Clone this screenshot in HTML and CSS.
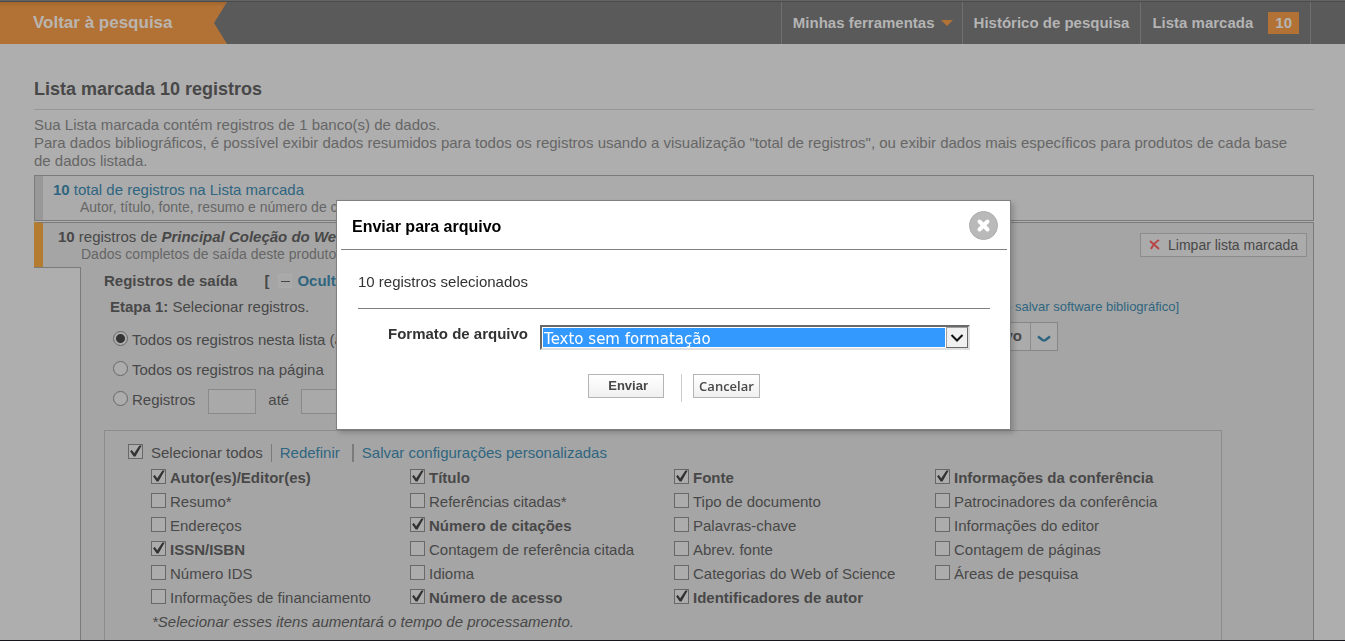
FILE: index.html
```html
<!DOCTYPE html>
<html lang="pt-BR">
<head>
<meta charset="utf-8">
<title>Lista marcada</title>
<link rel="stylesheet" href="styles.css">
</head>
<body>
<div class="page">
  <header class="topbar">
    <a class="back" href="#">Voltar à pesquisa</a>
    <nav class="nav">
      <a class="nav-item" href="#">Minhas ferramentas <span class="caret"></span></a>
      <a class="nav-item" href="#">Histórico de pesquisa</a>
      <a class="nav-item" href="#">Lista marcada <span class="count">10</span></a>
    </nav>
  </header>
  <main class="content">
    <h1 class="title">Lista marcada 10 registros</h1>
    <div class="intro">
      <p>Sua Lista marcada contém registros de 1 banco(s) de dados.</p>
      <p>Para dados bibliográficos, é possível exibir dados resumidos para todos os registros usando a visualização "total de registros", ou exibir dados mais específicos para produtos de cada base de dados listada.</p>
    </div>
    <section class="total">
      <a class="total-link" href="#"><b>10</b> total de registros na Lista marcada</a>
      <p class="sub">Autor, título, fonte, resumo e número de citações</p>
    </section>
    <section class="product">
      <div class="product-head">
        <div>
          <p class="product-name"><b>10</b> registros de <b><i>Principal Coleção do Web of Science</i></b></p>
          <p class="sub">Dados completos de saída deste produto</p>
        </div>
        <button class="clear" type="button">
          <svg width="12" height="12" viewBox="0 0 12 12"><path d="M1 2L10 10M10 1Q5 4 2 10" fill="none" stroke="#b94343" stroke-width="2"/></svg>
          Limpar lista marcada
        </button>
      </div>
      <div class="product-body">
        <div class="gutter"></div>
        <div class="panel">
          <h2 class="panel-title">Registros de saída <span class="toggle">[ <span class="minus"></span> <a href="#">Ocultar opções</a> ]</span></h2>
          <div class="steps">
            <div class="step">
              <p class="step-title"><b>Etapa 1:</b> Selecionar registros.</p>
              <div class="option"><input class="radio" type="radio" name="range" id="r1" checked><label for="r1">Todos os registros nesta lista (até 500)</label></div>
              <div class="option"><input class="radio" type="radio" name="range" id="r2"><label for="r2">Todos os registros na página</label></div>
              <div class="option"><input class="radio" type="radio" name="range" id="r3"><label for="r3">Registros</label><input class="num from" type="text" aria-label="De"><label for="to">até</label><input class="num" type="text" id="to"></div>
            </div>
            <div class="step-right">
              <a class="help" href="#">[Saiba mais sobre como salvar software bibliográfico]</a>
              <button class="save" type="button"><span class="save-label">Salvar em arquivo</span><span class="save-arrow"><svg width="14" height="8" viewBox="0 0 14 8"><path d="M1 1.5L5.5 5Q7 6 8.500 5L13 1.500" fill="none" stroke="#2f6580" stroke-width="2.500"/></svg></span></button>
            </div>
          </div>
          <div class="fields">
            <div class="fields-bar">
              <input class="check" type="checkbox" id="all" checked><label class="all-label" for="all">Selecionar todos</label>
              <a class="reset" href="#">Redefinir</a>
              <a class="store" href="#">Salvar configurações personalizadas</a>
            </div>
            <div class="field-grid">
              <div class="field"><input class="check" type="checkbox" id="f1" checked><label for="f1">Autor(es)/Editor(es)</label></div>
              <div class="field"><input class="check" type="checkbox" id="f2" checked><label for="f2">Título</label></div>
              <div class="field"><input class="check" type="checkbox" id="f3" checked><label for="f3">Fonte</label></div>
              <div class="field"><input class="check" type="checkbox" id="f4" checked><label for="f4">Informações da conferência</label></div>
              <div class="field"><input class="check" type="checkbox" id="f5"><label for="f5">Resumo*</label></div>
              <div class="field"><input class="check" type="checkbox" id="f6"><label for="f6">Referências citadas*</label></div>
              <div class="field"><input class="check" type="checkbox" id="f7"><label for="f7">Tipo de documento</label></div>
              <div class="field"><input class="check" type="checkbox" id="f8"><label for="f8">Patrocinadores da conferência</label></div>
              <div class="field"><input class="check" type="checkbox" id="f9"><label for="f9">Endereços</label></div>
              <div class="field"><input class="check" type="checkbox" id="f10" checked><label for="f10">Número de citações</label></div>
              <div class="field"><input class="check" type="checkbox" id="f11"><label for="f11">Palavras-chave</label></div>
              <div class="field"><input class="check" type="checkbox" id="f12"><label for="f12">Informações do editor</label></div>
              <div class="field"><input class="check" type="checkbox" id="f13" checked><label for="f13">ISSN/ISBN</label></div>
              <div class="field"><input class="check" type="checkbox" id="f14"><label for="f14">Contagem de referência citada</label></div>
              <div class="field"><input class="check" type="checkbox" id="f15"><label for="f15">Abrev. fonte</label></div>
              <div class="field"><input class="check" type="checkbox" id="f16"><label for="f16">Contagem de páginas</label></div>
              <div class="field"><input class="check" type="checkbox" id="f17"><label for="f17">Número IDS</label></div>
              <div class="field"><input class="check" type="checkbox" id="f18"><label for="f18">Idioma</label></div>
              <div class="field"><input class="check" type="checkbox" id="f19"><label for="f19">Categorias do Web of Science</label></div>
              <div class="field"><input class="check" type="checkbox" id="f20"><label for="f20">Áreas de pesquisa</label></div>
              <div class="field"><input class="check" type="checkbox" id="f21"><label for="f21">Informações de financiamento</label></div>
              <div class="field"><input class="check" type="checkbox" id="f22" checked><label for="f22">Número de acesso</label></div>
              <div class="field"><input class="check" type="checkbox" id="f23" checked><label for="f23">Identificadores de autor</label></div>
            </div>
            <p class="note">*Selecionar esses itens aumentará o tempo de processamento.</p>
          </div>
        </div>
      </div>
    </section>
  </main>
</div>
<div class="modal" role="dialog" aria-modal="true" aria-labelledby="modal-title">
  <div class="modal-head">
    <h2 class="modal-title" id="modal-title">Enviar para arquivo</h2>
    <button class="close" type="button" aria-label="Fechar"><svg width="29" height="29" viewBox="0 0 29 29"><circle cx="14.5" cy="14.5" r="14" fill="#b9b9b9" stroke="#acacac"/><path d="M10.5 10.5L18.5 18.5M18.5 10.5L10.5 18.5" stroke="#fff" stroke-width="4" stroke-linecap="round"/></svg></button>
  </div>
  <form class="modal-body">
    <p class="selected">10 registros selecionados</p>
    <div class="format">
      <label class="format-label" for="format">Formato de arquivo</label>
      <div class="select-wrap">
        <select class="select" id="format"><option>Texto sem formatação</option></select>
        <span class="select-arrow"><svg width="14" height="10" viewBox="0 0 14 10"><path d="M1.500 2L7 7.500L12.500 2" fill="none" stroke="#111" stroke-width="2"/></svg></span>
      </div>
    </div>
    <div class="actions">
      <button class="btn send" type="button">Enviar</button>
      <span class="divider"></span>
      <button class="btn cancel" type="button">Cancelar</button>
    </div>
  </form>
</div>
</body>
</html>
```
FILE: styles.css
```css
* { box-sizing: border-box; }
body {
  margin: 0;
  background: #aeaeae;
  color: #484848;
  font: 15px/18px "Liberation Sans", Arial, sans-serif;
}
h1, h2, p { margin: 0; }
a { color: #2f6580; text-decoration: none; }
button, input, select { font: inherit; margin: 0; }
.page { height: 100vh; overflow: hidden; border-bottom: 1px solid #16161c; }

.topbar {
  display: flex;
  justify-content: space-between;
  height: 44px;
  padding: 2px 34px 0 0;
  background: linear-gradient(#646464 0 1px, #4c4c4c 1px 2px, #5a5a5a 2px);
}
.back {
  width: 227px;
  padding: 12px 33px;
  background: linear-gradient(#a0662f, #b37235 5px);
  clip-path: polygon(0 0, 100% 0, 214px 50%, 100% 100%, 0 100%);
  color: #b9b5b1;
  font-size: 17px;
  font-weight: bold;
}
.nav { display: flex; border-right: 1px solid #707070; }
.nav-item {
  display: flex;
  align-items: center;
  padding: 0 11px;
  border-left: 1px solid #707070;
  color: #b4b4b4;
  font-weight: bold;
}
.caret {
  margin-left: 6px;
  border: 6px solid transparent;
  border-top-color: #b37235;
  border-bottom: 0;
}
.nav-item .caret { margin-right: -2px; }
.count { margin-left: 15px; padding: 2px 7px; background: #b37235; }

.content { padding: 35px 31px 0 34px; }
.title {
  padding-bottom: 10px;
  border-bottom: 1px solid #979797;
  font-size: 18px;
  line-height: 20px;
}
.intro { padding: 6px 26px 5px 0; color: #666; }
.sub { padding-left: 27px; color: #666; font-size: 14px; line-height: 16px; }
.total {
  min-height: 46px;
  padding: 5px 0 0 10px;
  margin-bottom: 1px;
  border: 1px solid #7b7b7b;
  background: linear-gradient(90deg, #989898 8px, #ababab 8px);
}
.total-link { display: block; margin-left: 8px; }
.total .sub { padding-left: 35px; }

.product-head {
  display: flex;
  justify-content: space-between;
  align-items: flex-start;
  height: 45px;
  padding: 5px 6px 0 11px;
  border: 1px solid #7b7b7b;
  border-width: 1px 1px 0 0;
  border-left: 9px solid #b37c31;
  background: #a5a5a5;
}
.product-name { margin-left: 4px; }
.clear {
  display: flex;
  align-items: center;
  gap: 7px;
  height: 24px;
  margin-top: 5px;
  padding: 0 8px;
  border: 1px solid #8c8c8c;
  background: #ababab;
  color: #484848;
  font-size: 14px;
}
.product-body { display: flex; }
.gutter { width: 46px; border-top: 1px solid #7b7b7b; }
.panel {
  flex: 1;
  padding: 5px 91px 0 23px;
  border: 1px solid #7b7b7b;
  border-width: 0 1px;
  background: #a5a5a5;
}
.panel-title { display: flex; font-size: 15px; }
.toggle { display: flex; align-items: center; gap: 5px; margin-left: 27px; }
.minus {
  width: 14px;
  height: 14px;
  margin-left: 4px;
  border: 1px solid #acacac;
  background: linear-gradient(#484848, #484848) center / 9px 1px no-repeat #a9a9a9;
}
.steps { display: flex; justify-content: space-between; padding: 8px 43px 16px 6px; }
.step-title { padding-bottom: 8px; }
.option { display: flex; align-items: center; height: 30px; }
.option label { padding-top: 1px; }
.radio {
  appearance: none;
  width: 15px;
  height: 15px;
  margin: 0 4px 2px 3px;
  border: 1px solid #686868;
  border-radius: 50%;
  background: #acacac;
}
.radio:checked { background: radial-gradient(circle, #333 4px, #acacac 5px); }
.num { width: 48px; height: 25px; margin: 5px 0 0 12px; border: 1px solid #8a8a8a; background: #a9a9a9; }
.num.from { margin-left: 13px; margin-right: 12px; }
.step-right { display: flex; flex-direction: column; align-items: flex-end; gap: 6px; }
.help { font-size: 13px; }
.save {
  display: flex;
  height: 29px;
  margin-right: 121px;
  padding: 0;
  border: 1px solid #868686;
  background: #ababab;
  color: #484848;
  font-weight: bold;
}
.save-label { padding: 4px 8px; }
.save-arrow { align-self: stretch; display: flex; align-items: center; padding: 4px 6px 0; border-left: 1px solid #8c8c8c; }

.fields { border: 1px solid #8c8c8c; padding: 12px 0 20px 23px; }
.fields-bar { display: flex; align-items: center; height: 20px; }
.check {
  appearance: none;
  flex: none;
  width: 15px;
  height: 15px;
  margin-bottom: 4px;
  border: 1px solid #686868;
  background: #acacac;
}
.check:checked::before {
  content: "";
  display: block;
  width: 13px;
  height: 13px;
  background: #333;
  clip-path: polygon(8% 52%, 22% 43%, 40% 67%, 80% 8%, 98% 8%, 50% 93%, 36% 93%);
}
.all-label { margin: 0 8px; }
.reset { padding: 0 12px 0 8px; border-left: 1px solid #7b7b7b; }
.store { padding-left: 8px; border-left: 2px solid #7b7b7b; }
.field-grid {
  display: grid;
  grid-template-columns: 259fr 264fr 261fr 286fr;
  padding: 3px 0 0 23px;
}
.field { display: flex; align-items: center; gap: 4px; height: 24px; }
.field .check:checked + label { font-weight: bold; }
.note { padding: 3px 0 0 24px; font-style: italic; }

.modal {
  position: fixed;
  top: 200px;
  left: 2px;
  right: 0;
  width: 675px;
  max-width: 100%;
  margin: 0 auto;
  padding: 0 3px 27px 4px;
  border: 1px solid #808080;
  background: #fff;
  box-shadow: 3px 3px 5px rgba(0, 0, 0, 0.18);
  color: #333;
}
.modal-head {
  display: flex;
  justify-content: space-between;
  align-items: center;
  height: 49px;
  padding: 0 9px 0 11px;
  border-bottom: 1px solid #808080;
}
.modal-title { color: #000; font-size: 16px; padding-top: 3px; }
.close { display: flex; padding: 0; border: 0; background: none; }
.modal-body { padding: 0 17px; }
.selected { padding: 23px 0 17px; border-bottom: 1px solid #808080; }
.format { display: flex; padding: 16px 20px 24px 30px; gap: 12px; }
.format-label { font-weight: bold; }
.select-wrap { position: relative; flex: 1; }
.select {
  appearance: none;
  display: block;
  width: 100%;
  height: 25px;
  padding: 2px 22px 0 2px;
  border: 2px solid #e0e0e0;
  border-top-color: #696969;
  border-left-color: #696969;
  border-radius: 0;
  background: linear-gradient(#39f, #39f) 1px 1px / calc(100% - 24px) 19px no-repeat #fff;
  color: #fff;
  font: 15px/18px "DejaVu Sans", sans-serif;
}
.select-arrow {
  position: absolute;
  top: 2px;
  right: 2px;
  display: flex;
  align-items: center;
  justify-content: center;
  width: 22px;
  height: 21px;
  border: 1px solid #696969;
  border-left-color: #a0a0a0;
  border-top-color: #a0a0a0;
  background: #f0f0f0;
  pointer-events: none;
}
.actions { display: flex; justify-content: center; }
.btn {
  height: 24px;
  padding: 0 5px;
  border: 1px solid #b4b4b4;
  background: linear-gradient(#fff, #f0f0f0);
  color: #484848;
}
.send { width: 76px; padding-left: 9px; font-size: 13px; font-weight: bold; }
.cancel { font: 600 13px/18px "Open Sans", sans-serif; }
.divider { width: 1px; height: 28px; margin: 0 11px 0 17px; background: #ccc; }
```
